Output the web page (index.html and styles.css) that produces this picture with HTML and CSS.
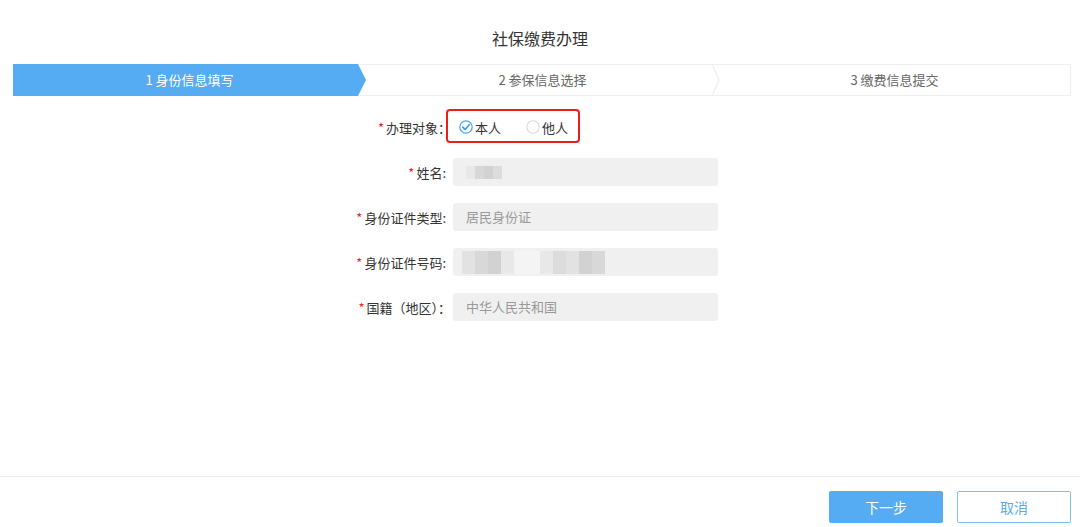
FILE: index.html
```html
<!DOCTYPE html>
<html lang="zh-CN">
<head>
<meta charset="utf-8">
<title>社保缴费办理</title>
<link rel="stylesheet" href="styles.css">
</head>
<body>
<div class="page">
  <main class="main">
    <h1 class="title">社保缴费办理</h1>
    <div class="steps">
      <div class="step step-active">1 身份信息填写</div>
      <div class="step step-mid">2 参保信息选择
        <svg class="chev" width="10" height="32" viewBox="0 0 10 32"><path d="M1 0 L8 16 L1 32" fill="none" stroke="#ececec" stroke-width="1.2"/></svg>
      </div>
      <div class="step">3 缴费信息提交</div>
    </div>

    <form class="form">
      <div class="row">
        <label class="label"><span class="req">*</span>办理对象：</label>
        <div class="field radios">
          <span class="radio checked">
            <svg width="14" height="14" viewBox="0 0 14 14"><circle cx="7" cy="7" r="6.2" fill="#fff" stroke="#4aa3ee" stroke-width="1.2"/><path d="M3.8 7.2 L6.1 9.5 L10.3 4.7" fill="none" stroke="#3d9cec" stroke-width="1.7" stroke-linecap="round" stroke-linejoin="round"/></svg>
            本人
          </span>
          <span class="radio">
            <svg width="14" height="14" viewBox="0 0 14 14"><circle cx="7" cy="7" r="6.2" fill="#fff" stroke="#d9d9d9" stroke-width="1.1"/></svg>
            他人
          </span>
          <div class="highlight"></div>
        </div>
      </div>
      <div class="row">
        <label class="label half"><span class="req">*</span>姓名:</label>
        <div class="field input">
          <div class="mosaic m-name"><i class="mk e"></i><i class="mk a"></i><i class="mk c"></i><i class="mk d"></i></div>
        </div>
      </div>
      <div class="row">
        <label class="label half"><span class="req">*</span>身份证件类型:</label>
        <div class="field input">居民身份证</div>
      </div>
      <div class="row">
        <label class="label half"><span class="req">*</span>身份证件号码:</label>
        <div class="field input">
          <div class="mosaic m-id"><i class="mk b"></i><i class="mk a"></i><i class="mk c"></i><i class="mk e"></i><i class="mk f"></i><i class="mk f"></i><i class="mk e"></i><i class="mk d"></i><i class="mk b"></i><i class="mk c"></i><i class="mk a"></i></div>
        </div>
      </div>
      <div class="row">
        <label class="label"><span class="req">*</span>国籍（地区）：</label>
        <div class="field input">中华人民共和国</div>
      </div>
    </form>
  </main>
  <footer class="footer">
    <button class="btn btn-primary" type="button">下一步</button>
    <button class="btn btn-default" type="button">取消</button>
  </footer>
</div>
</body>
</html>
```
FILE: styles.css
```css
* { box-sizing: border-box; }
html, body { margin: 0; padding: 0; background: #fff; }
body {
  font-family: "Noto Sans CJK SC", "Noto Sans", "Liberation Sans", sans-serif;
  color: #333;
  font-size: 13px;
}
.page {
  width: 1080px;
  height: 527px;
  display: flex;
  flex-direction: column;
}
.main { flex: 1; }
.title {
  margin: 0;
  height: 64px;
  padding-top: 26px;
  text-align: center;
  font-size: 16px;
  font-weight: normal;
  line-height: 24px;
  color: #333;
}
.steps {
  margin: 0 9px 0 13px;
  height: 32px;
  border: 1px solid #eeeeee;
  display: flex;
}
.step {
  position: relative;
  flex: 1;
  text-align: center;
  line-height: 30px;
  color: #666;
  font-size: 13px;
}
.step-active {
  flex: 0 0 353px;
  margin: -1px 0 -1px -1px;
  line-height: 32px;
  height: 32px;
  color: #fff;
  background: #55acf2;
  clip-path: polygon(0 0, 345px 0, 353px 16px, 345px 32px, 0 32px);
}
.step-mid { flex: 0 0 353px; }
.chev { position: absolute; right: -2px; top: -1px; }
.form {
  padding-top: 17px;
  display: flex;
  flex-direction: column;
  gap: 17px;
}
.row {
  display: flex;
  align-items: center;
  height: 28px;
}
.label {
  width: 451px;
  text-align: right;
  font-size: 13px;
  color: #333;
}
.label.half { padding-right: 5px; }
.req { color: #f5222d; margin-right: 2px; font-size: 13px; }
.field { width: 265px; height: 28px; margin-left: 2px; }
.radios {
  position: relative;
  display: flex;
  align-items: center;
  padding-left: 6px;
  font-size: 13px;
  color: #333;
}
.radio { display: inline-flex; align-items: center; gap: 2px; }
.radio svg { display: block; }
.radio.checked { width: 67px; }
.highlight {
  position: absolute;
  left: -7px;
  top: -4px;
  width: 134px;
  height: 34px;
  border: 2px solid #ef1c1c;
  border-radius: 4px;
}
.input {
  background: #f0f0f0;
  border-radius: 3px;
  padding-left: 13px;
  line-height: 28px;
  color: #999;
  font-size: 13px;
  position: relative;
}
.mosaic {
  position: absolute;
  display: flex;
}
.m-name { left: 13px; top: 8px; height: 13px; }
.m-name .mk { width: 9px; }
.m-id { left: 9px; top: 3px; height: 23px; }
.m-id .mk { width: 13px; }
.mk { display: block; height: 100%; }
.mk.a { background: #d8d8d8; }
.mk.b { background: #e2e2e2; }
.mk.c { background: #d2d2d2; }
.mk.d { background: #dcdcdc; }
.mk.e { background: #e8e8e8; }
.mk.f { background: #f4f4f4; }
.footer {
  height: 51px;
  border-top: 1px solid #eeeeee;
  display: flex;
  justify-content: flex-end;
  align-items: flex-start;
  padding: 14px 9px 0 0;
  gap: 14px;
}
.btn {
  width: 114px;
  height: 32px;
  border-radius: 2px;
  font-family: inherit;
  font-size: 14px;
  cursor: pointer;
}
.btn-primary {
  background: #55acf2;
  border: 1px solid #55acf2;
  color: #fff;
}
.btn-default {
  background: #fff;
  border: 1px solid #7fc0f4;
  color: #55acf2;
}
```
